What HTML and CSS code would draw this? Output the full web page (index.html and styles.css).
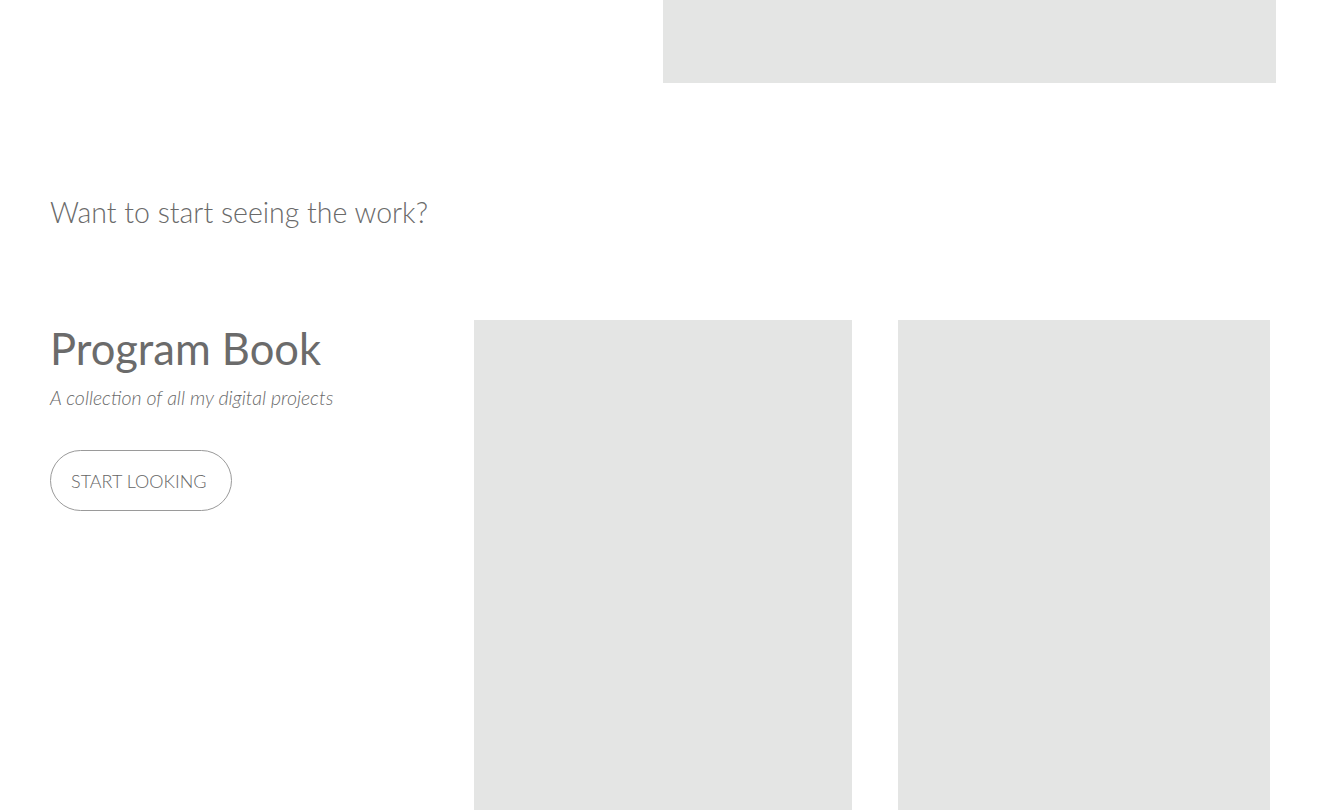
FILE: index.html
```html
<!DOCTYPE html>
<html>
<head>
<meta charset="utf-8">
<link rel="stylesheet" href="styles.css">
</head>
<body>
<div class="page">
  <div class="top-row">
    <div class="top-image"></div>
  </div>
  <h2 class="prompt">Want to start seeing the work?</h2>
  <section class="project">
    <div class="project-info">
      <h1 class="project-title">Program Book</h1>
      <p class="project-sub">A collection of all my digital projects</p>
      <a class="btn">START LOOKING</a>
    </div>
    <div class="project-images">
      <div class="img img-a"></div>
      <div class="img img-b"></div>
    </div>
  </section>
</div>
</body>
</html>
```
FILE: styles.css
```css
html, body { margin: 0; padding: 0; background: #fff; }
body { font-family: Lato, "Open Sans", sans-serif; color: #6b6b6b; overflow: hidden; height: 810px; }
.page { padding: 0 48px 0 50px; }
.top-row { display: flex; justify-content: flex-end; }
.top-image { width: 613px; height: 83px; background: #e4e5e4; }
.prompt { margin: 109px 0 0; font-weight: 300; font-size: 28.5px; line-height: 40px; color: #6a6a6a; }
.project { display: flex; margin-top: 88px; }
.project-info { width: 424px; flex: none; }
.project-title { margin: 0; font-weight: 400; font-size: 43.5px; line-height: 56px; color: #6b6b6b; }
.project-sub { margin: 10px 0 0; font-style: italic; font-weight: 300; font-size: 19.5px; color: #6a6a6a; }
.btn { display: inline-flex; align-items: center; box-sizing: border-box; padding-left: 20px; margin-top: 41px; width: 182px; height: 61px; border: 1px solid #9a9a9a; border-radius: 31px; font-size: 18px; font-weight: 300; color: #666; }
.project-images { display: flex; gap: 46px; }
.img { height: 490px; background: #e4e5e4; }
.img-a { width: 378px; }
.img-b { width: 372px; }
```
